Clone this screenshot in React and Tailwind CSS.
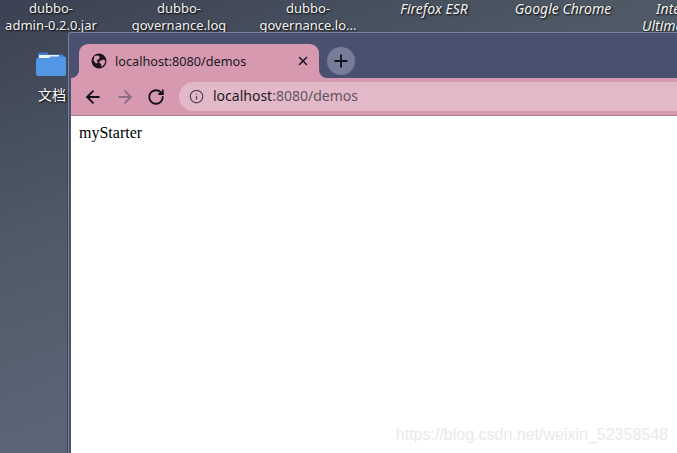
import React from 'react';
import { ArrowLeft, ArrowRight, RotateCw, Info, X, Plus } from 'lucide-react';

const sans = 'font-["Noto_Sans","Noto_Sans_CJK_SC",sans-serif]';

function DesktopLabel({ className, children }) {
  return (
    <div className={`absolute text-center leading-[17px] text-[#f2f2f2] [text-shadow:1px_1px_2px_#000] whitespace-nowrap ${className}`}>
      {children}
    </div>
  );
}

function Globe() {
  return (
    <svg viewBox="0 0 16 16" className="w-[16px] h-[16px] shrink-0">
      <circle cx="8" cy="8" r="7.5" fill="#1b1420" />
      <path d="M3.500 3 7 2.500l2 1.500-1.500 2.500L5.500 7 7 9.500 5 10.500 2.500 7.500Z M9.500 7.500l3.500-1 1.500 2-1.500 3-2.500 2.500-.5-3-2-1.500Z" fill="#d799b0" />
    </svg>
  );
}

export default function App() {
  return (
    <div className={`relative w-[677px] h-[453px] overflow-hidden bg-[linear-gradient(160deg,#3b4152_0%,#4f5a66_35%,#5a6677_65%)] ${sans}`}>
      <DesktopLabel className="left-[0px] top-0 w-[102px] text-[13px]">dubbo-<br />admin-0.2.0.jar</DesktopLabel>
      <DesktopLabel className="left-[129px] top-0 w-[100px] text-[13px]">dubbo-<br />governance.log</DesktopLabel>
      <DesktopLabel className="left-[257px] top-0 w-[102px] text-[13px]">dubbo-<br />governance.lo...</DesktopLabel>
      <DesktopLabel className="left-[384px] top-0 w-[100px] text-[14px] italic">Firefox ESR</DesktopLabel>
      <DesktopLabel className="left-[513px] top-0 w-[100px] text-[14px] italic">Google Chrome</DesktopLabel>
      <DesktopLabel className="left-[642px] top-0 !text-left text-[14px] italic"><span className="pl-[14px]">Inte</span><br />Ultima</DesktopLabel>

      <svg viewBox="0 0 30 24" className="absolute left-[36px] top-[52px] w-[30px] h-[24px]">
        <path d="M2 2.500Q2 .5 4 .5h7l2 2h13q2 0 2 2V8H2Z" fill="#3f7fcb" />
        <rect x="3" y="3" width="20" height="5" fill="#eef3f9" />
        <path d="M0 8q0-2 2-2h11l2-1.500h13q2 0 2 2V22q0 2-2 2H2q-2 0-2-2Z" fill="#5396e6" />
      </svg>
      <DesktopLabel className="left-[37px] top-[86px] w-[30px] text-[14px] text-white">文档</DesktopLabel>

      <div className="relative z-10 ml-[68px] mt-[32px] h-[421px] border-l border-t border-[#7b8296] rounded-tl-[3px] bg-[#4a506f] shadow-[-1px_0_0_#3f4656] flex flex-col">
        <div className="h-[45px] flex items-end pl-[10px] shrink-0">
          <div className="relative w-[240px] h-[34px] bg-[#d799b0] rounded-t-[9px] flex items-center pl-[12px] pr-[9px]">
            <div className="absolute left-[-8px] bottom-0 w-[8px] h-[8px] bg-[#d799b0]">
              <div className="w-full h-full bg-[#4a506f] rounded-br-[8px]" />
            </div>
            <div className="absolute right-[-8px] bottom-0 w-[8px] h-[8px] bg-[#d799b0]">
              <div className="w-full h-full bg-[#4a506f] rounded-bl-[8px]" />
            </div>
            <Globe />
            <span className="ml-[8px] mt-[1px] text-[12.700px] text-[#201a24] flex-1">localhost:8080/demos</span>
            <X className="w-[14px] h-[14px] text-[#1b1420]" strokeWidth={2.5} />
          </div>
          <div className="ml-[8px] mb-[3px] w-[28px] h-[28px] rounded-full bg-[#777c99] flex items-center justify-center">
            <Plus className="w-[20px] h-[20px] text-[#14141f]" strokeWidth={2.2} />
          </div>
        </div>
        <div className="h-[38px] ml-[2px] bg-[#d799b0] border-b border-[#a87b90] flex items-center pl-[12px] shrink-0">
          <ArrowLeft className="w-[20px] h-[20px] text-[#14101a]" strokeWidth={2.2} />
          <ArrowRight className="ml-[12px] w-[20px] h-[20px] text-[#8c6d85]" strokeWidth={2.2} />
          <RotateCw className="ml-[12px] w-[18px] h-[18px] text-[#14101a]" strokeWidth={2.4} />
          <div className="ml-[14px] flex-1 h-[29px] bg-[#e3b8c9] rounded-l-full flex items-center pl-[10px]">
            <Info className="w-[15px] h-[15px] text-[#4e4550]" strokeWidth={2} />
            <span className="ml-[9px] mb-[2px] text-[14px] text-[#1f1a22]">localhost<span className="text-[#5f5560]">:8080/demos</span></span>
          </div>
        </div>
        <div className="relative flex-1 ml-[2px] bg-white pl-[8px] pt-[8px] text-[16px] leading-[18px] text-black font-['Liberation_Serif',serif]">
          myStarter
          <div className="absolute right-[9px] bottom-[9px] text-[16px] leading-[18px] text-[#e9e9e9] font-['Liberation_Sans',sans-serif]">
            https://blog.csdn.net/weixin_52358548
          </div>
        </div>
      </div>
    </div>
  );
}
